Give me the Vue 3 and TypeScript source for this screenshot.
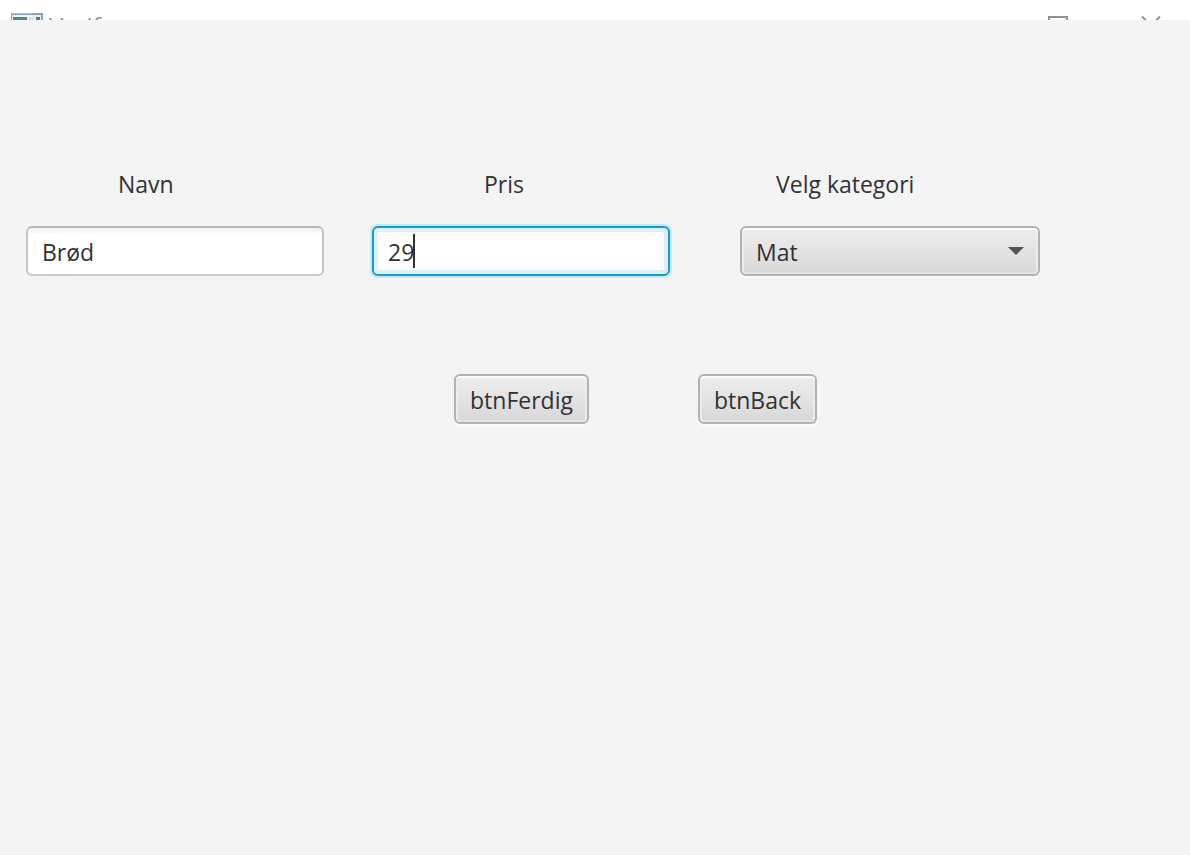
<script setup lang="ts">
import { onMounted, ref } from 'vue'

const navn = ref('Brød')
const pris = ref('29')
const kategori = ref('Mat')
const kategorier: string[] = ['Mat', 'Drikke', 'Annet']
const prisInput = ref<HTMLInputElement | null>(null)

onMounted(() => prisInput.value?.focus())
</script>

<template>
  <div class="window">
    <header class="titlebar">
      <svg class="app-icon" viewBox="0 0 32 28" aria-hidden="true">
        <rect x="0" y="0" width="32" height="28" fill="#8f9fab" />
        <rect x="0" y="0" width="22" height="1" fill="#b3c4cc" />
        <rect x="1" y="2" width="29" height="24" fill="#eef3f6" />
        <rect x="2" y="4" width="14" height="20" fill="#4c8796" />
        <rect x="18" y="4" width="5" height="20" fill="#dfe2e3" />
        <rect x="25" y="4" width="4" height="20" fill="#57798c" />
      </svg>
      <span class="title">Verif</span>
      <svg class="win-icon maximize" viewBox="0 0 20 20" aria-hidden="true">
        <rect x="1" y="1" width="18" height="18" fill="none" stroke="#919191" stroke-width="2" />
      </svg>
      <svg class="win-icon close" viewBox="0 0 20 20" aria-hidden="true">
        <path d="M1 0.5 19 18.5M19 0.5 1 18.5" fill="none" stroke="#919191" stroke-width="2" />
      </svg>
    </header>

    <main class="content">
      <form class="form" @submit.prevent>
        <div class="fields">
          <div class="field">
            <label class="label label-navn" for="navn">Navn</label>
            <input id="navn" v-model="navn" class="control" type="text" />
          </div>
          <div class="field">
            <label class="label label-pris" for="pris">Pris</label>
            <div class="caret-box">
              <input id="pris" ref="prisInput" v-model="pris" class="control active" type="text" />
              <span class="caret" aria-hidden="true"></span>
            </div>
          </div>
          <div class="field field-kategori">
            <label class="label label-kategori" for="kategori">Velg kategori</label>
            <div class="caret-box">
              <select id="kategori" v-model="kategori" class="control raised">
                <option v-for="k in kategorier" :key="k" :value="k">{{ k }}</option>
              </select>
              <svg class="arrow" viewBox="0 0 16 8" aria-hidden="true">
                <path d="M0 0H16L8 8Z" fill="#555" />
              </svg>
            </div>
          </div>
        </div>
        <div class="actions">
          <button class="button raised" type="submit">btnFerdig</button>
          <button class="button raised" type="button">btnBack</button>
        </div>
      </form>
    </main>
  </div>
</template>

<style>
body {
  margin: 0;
  background: #f4f4f4;
}
</style>

<style scoped>
.window {
  min-height: 100vh;
  background: #f4f4f4;
  color: #323232;
  font-family: "Open Sans", "Noto Sans", sans-serif;
  font-size: 23px;
  line-height: 32px;
}
.titlebar {
  display: flex;
  align-items: flex-start;
  box-sizing: border-box;
  height: 20px;
  padding: 13px 29px 0 11px;
  overflow: hidden;
  background: #fff;
}
.app-icon {
  flex: none;
  width: 32px;
  height: 28px;
}
.title {
  margin-left: 6px;
  color: #919191;
  font-size: 24px;
  line-height: 26px;
}
.win-icon {
  flex: none;
  width: 20px;
  height: 20px;
  margin-top: 3px;
}
.maximize {
  margin-left: auto;
}
.close {
  margin-left: 73px;
}
.content {
  padding: 148px 26px 0;
}
.fields {
  display: flex;
  gap: 48px;
}
.field {
  display: flex;
  flex-direction: column;
  gap: 26px;
  flex: 0 1 298px;
}
.field-kategori {
  flex-basis: 300px;
  margin-left: 22px;
}
.label {
  align-self: flex-start;
}
.label-navn {
  margin-left: 92px;
}
.label-pris {
  margin-left: 112px;
}
.label-kategori {
  margin-left: 36px;
}
.control,
.button {
  box-sizing: border-box;
  height: 50px;
  margin: 0;
  padding: 1px 14px 0;
  border: 2px solid #b5b5b5;
  border-radius: 6px;
  color: inherit;
  font: inherit;
  outline: none;
}
.control {
  display: block;
  width: 100%;
  border-color: #b5b5b5 #c4c4c4 #cacaca;
  background: linear-gradient(#f2f2f2, #fff 8px);
}
.active {
  border-color: #189bcf;
  background: #fff;
  box-shadow: 0 0 0 2px #c2eaf5, inset 0 0 0 4px #dbf0f8;
  caret-color: transparent;
}
.raised {
  border-color: #b2b2b2;
  background: linear-gradient(#eee, #d8d8d8);
  box-shadow: 0 2px 0 #fafafa, inset 0 2px 0 #fcfcfc, inset 2px 0 0 #ececec, inset -2px 0 0 #ececec, inset 0 -2px 0 #e2e2e2;
}
select.control {
  appearance: none;
}
.caret-box {
  position: relative;
}
.caret {
  position: absolute;
  top: 8px;
  left: 41px;
  width: 2px;
  height: 34px;
  background: #323232;
}
.arrow {
  position: absolute;
  top: 21px;
  right: 16px;
  width: 16px;
  height: 8px;
  pointer-events: none;
}
.actions {
  display: flex;
  gap: 109px;
  margin: 98px 0 0 428px;
}
</style>
